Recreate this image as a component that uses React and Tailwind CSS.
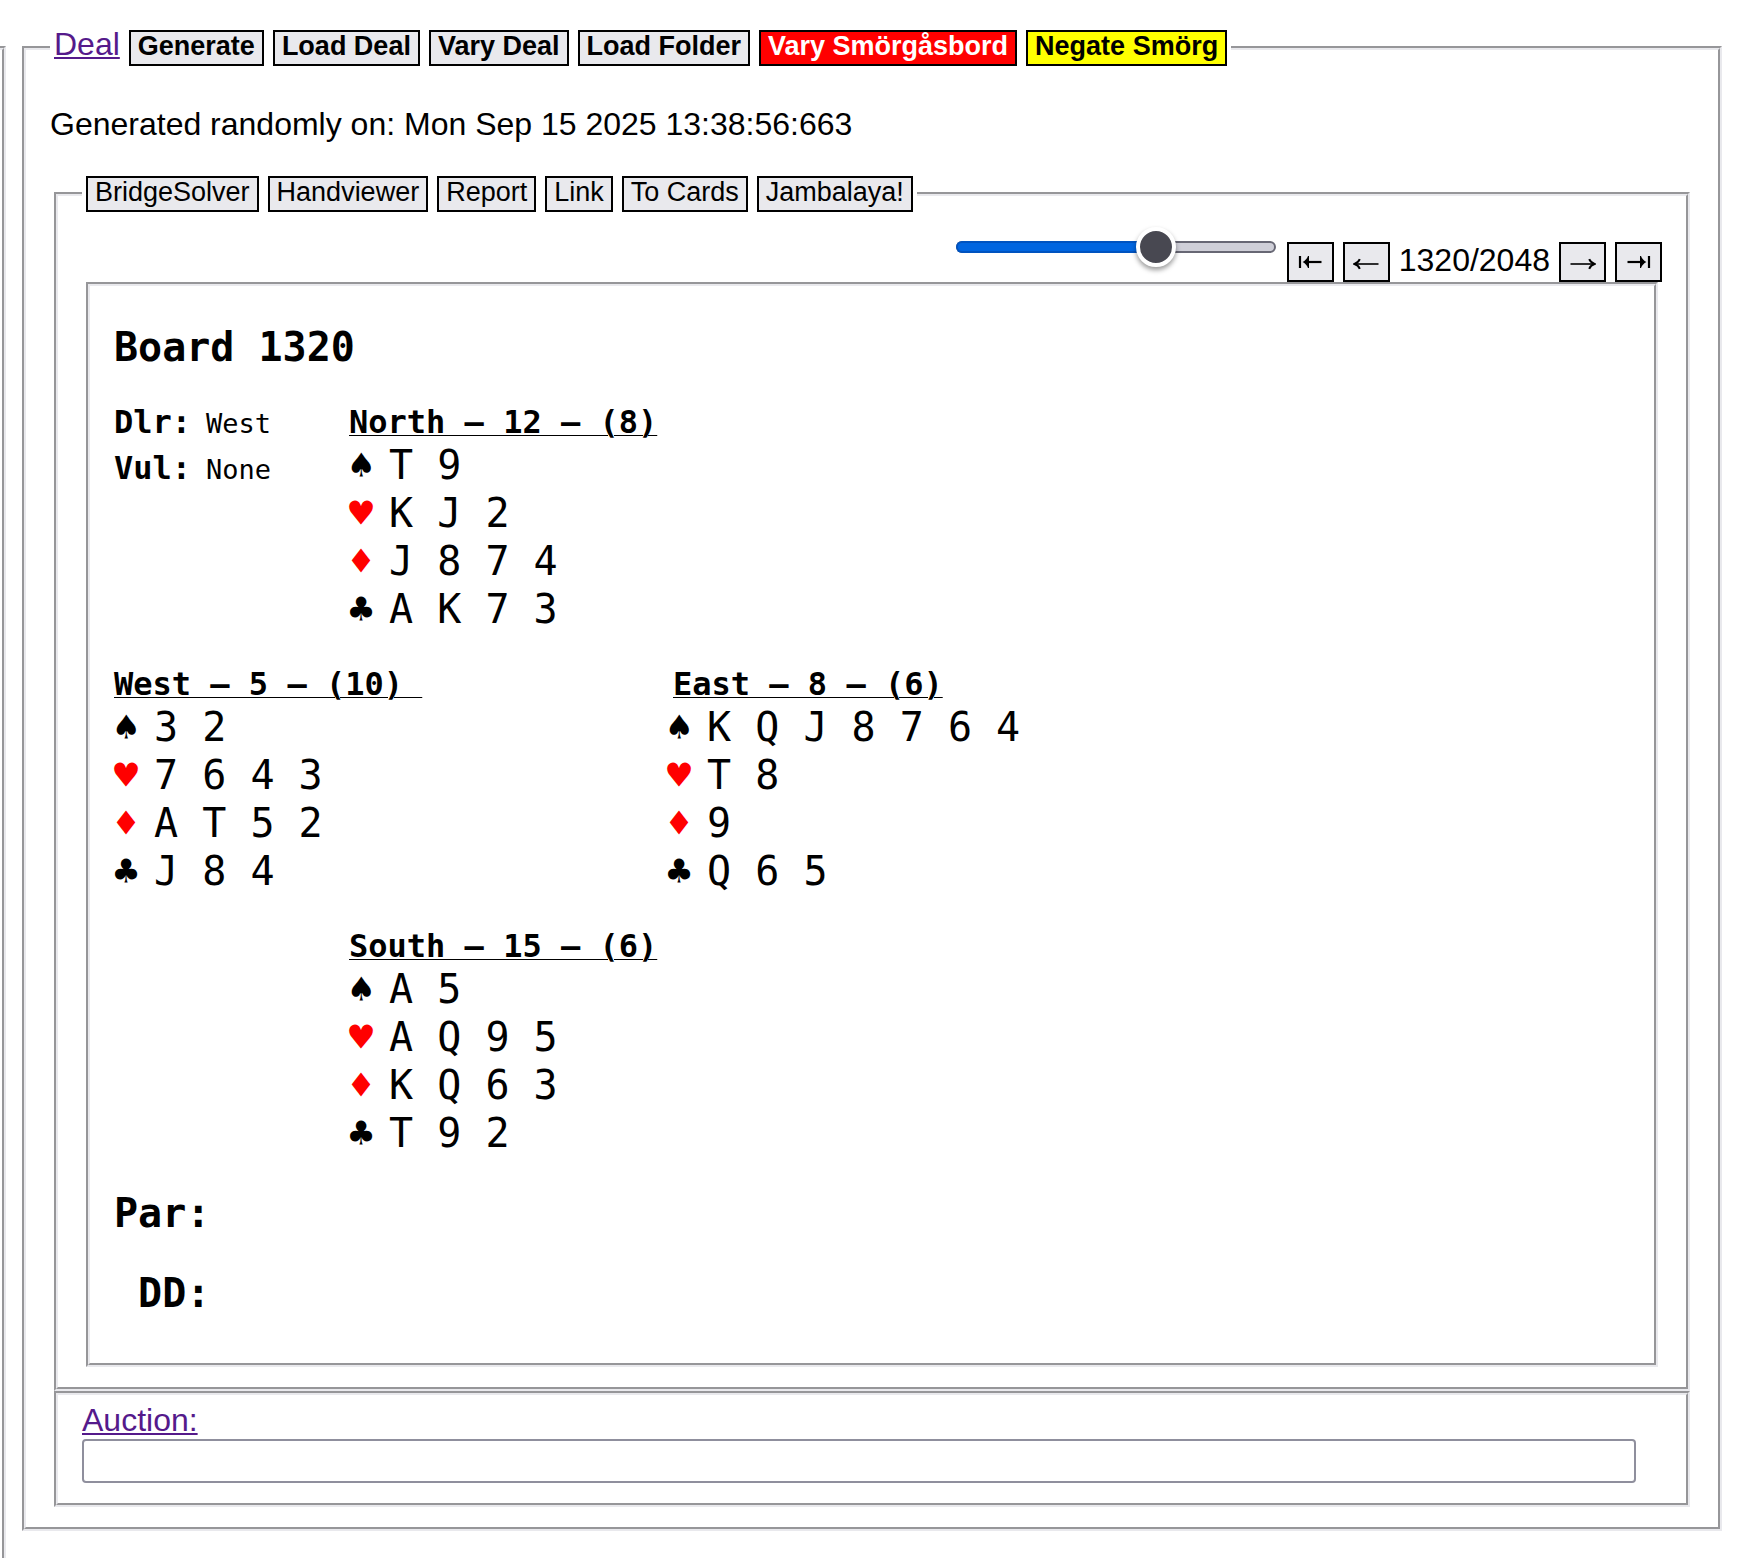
import React, { useState } from 'react';

const TOTAL_BOARDS = 2048;

const SUITS = [
  { key: 'spades', symbol: '\u2660', color: 'text-black' },
  { key: 'hearts', symbol: '\u2665', color: 'text-[#ff0000]' },
  { key: 'diamonds', symbol: '\u2666', color: 'text-[#ff0000]' },
  { key: 'clubs', symbol: '\u2663', color: 'text-black' },
];

const HANDS = {
  north: { title: 'North – 12 – (8)', spades: 'T 9', hearts: 'K J 2', diamonds: 'J 8 7 4', clubs: 'A K 7 3' },
  west: { title: 'West – 5 – (10) ', spades: '3 2', hearts: '7 6 4 3', diamonds: 'A T 5 2', clubs: 'J 8 4' },
  east: { title: 'East – 8 – (6)', spades: 'K Q J 8 7 6 4', hearts: 'T 8', diamonds: '9', clubs: 'Q 6 5' },
  south: { title: 'South – 15 – (6)', spades: 'A 5', hearts: 'A Q 9 5', diamonds: 'K Q 6 3', clubs: 'T 9 2' },
};

const DEAL_ACTIONS = [
  { label: 'Generate', className: 'bg-[#e9e9ed]' },
  { label: 'Load Deal', className: 'bg-[#e9e9ed]' },
  { label: 'Vary Deal', className: 'bg-[#e9e9ed]' },
  { label: 'Load Folder', className: 'bg-[#e9e9ed]' },
  { label: 'Vary Smörgåsbord', className: 'bg-[#ff0000] text-white' },
  { label: 'Negate Smörg', className: 'bg-[#ffff00]' },
];

const BOARD_ACTIONS = ['BridgeSolver', 'Handviewer', 'Report', 'Link', 'To Cards', 'Jambalaya!'];

const Button = ({ className = '', children }) => (
  <button
    type="button"
    className={`border-2 border-black px-[7px] pb-1 text-[27px] leading-7 whitespace-nowrap ${className}`}
  >
    {children}
  </button>
);

const NavButton = ({ label, onClick, children }) => (
  <button
    type="button"
    aria-label={label}
    onClick={onClick}
    className="flex h-10 w-[47px] items-center justify-center border-2 border-black bg-[#e9e9ed]"
  >
    {children}
  </button>
);

// Short heavy arrow that runs into a bar
const BarArrow = ({ className = '' }) => (
  <svg viewBox="0 0 24 14" className={`h-[14px] w-6 ${className}`} fill="none" aria-hidden="true">
    <path d="M2 1v12" stroke="black" strokeWidth="2.2" />
    <path d="M9 7h14.5" stroke="black" strokeWidth="2.2" />
    <path d="M4.6 7C7 5.8 9 3.8 10 1H11V13H10C9 10.2 7 8.2 4.6 7Z" fill="black" />
  </svg>
);

const ThinArrow = ({ className = '' }) => (
  <svg viewBox="0 0 26 12" className={`mt-1 h-3 w-[26px] ${className}`} fill="none" aria-hidden="true">
    <path d="M2 6h23.5" stroke="black" strokeWidth="1.6" />
    <path d="M6.8 1.2C5.8 3.6 3.9 5.2 1.4 6c2.5.8 4.4 2.4 5.4 4.8" stroke="black" strokeWidth="2" />
  </svg>
);

const BoardSlider = ({ value, onChange }) => {
  const fill = 20 + (value / TOTAL_BOARDS) * 280;

  return (
    <div className="relative mr-[2px] mb-[15px] flex h-10 w-80 items-center">
      <div className="h-3 w-full overflow-hidden rounded-full border-2 border-[#676774] bg-[#cfcfd8]" />
      <div
        className="absolute left-0 h-3 rounded-l-full border-2 border-r-0 border-[#0053c0] bg-[#0065e0]"
        style={{ width: `${fill}px` }}
      />
      <input
        type="range"
        min="0"
        max={TOTAL_BOARDS}
        value={value}
        onChange={(e) => onChange(Number(e.target.value))}
        aria-label="Board"
        className="absolute inset-0 h-10 w-full appearance-none bg-transparent [&::-webkit-slider-thumb]:h-10 [&::-webkit-slider-thumb]:w-10 [&::-webkit-slider-thumb]:appearance-none [&::-webkit-slider-thumb]:rounded-full [&::-webkit-slider-thumb]:border-4 [&::-webkit-slider-thumb]:border-white [&::-webkit-slider-thumb]:bg-[#484851] [&::-webkit-slider-thumb]:shadow-[0_3px_5px_rgba(0,0,0,0.4)]"
      />
    </div>
  );
};

const Hand = ({ hand, titleClassName = '' }) => (
  <div>
    <h3
      className={`text-[32px] leading-[38px] font-bold whitespace-pre underline decoration-1 underline-offset-2 ${titleClassName}`}
    >
      {hand.title}
    </h3>
    {SUITS.map((suit) => (
      <div key={suit.key} className="flex gap-4 text-[40px] leading-[48px] whitespace-nowrap">
        <span className={suit.color}>{suit.symbol}</span>
        <span>{hand[suit.key]}</span>
      </div>
    ))}
  </div>
);

const Info = ({ label, value }) => (
  <div className="flex items-baseline gap-[15px] leading-[38px]">
    <span className="text-[32px] font-bold">{label}</span>
    <span className="text-[27px]">{value}</span>
  </div>
);

const App = () => {
  const [board, setBoard] = useState(1320);
  const [auction, setAuction] = useState('');

  return (
    <div className="flex min-h-screen bg-white font-['Liberation_Sans',Arial,sans-serif] text-[32px] leading-9 text-black">
      {/* Edge of the neighbouring panel */}
      <div className="mt-[46px] w-[6px] shrink-0 border-t-4 border-r-4 border-[#e9e9ed] [border-style:groove]" />

      <main className="min-w-0 flex-1 pt-[30px] pr-5 pl-4">
        <fieldset className="border-4 border-[#e9e9ed] px-6 pt-10 pb-5 [border-style:groove]">
          <legend className="px-1">
            <div className="flex items-baseline gap-[9px]">
              <a href="#deal" className="leading-7 text-[#551a8b] underline decoration-2 underline-offset-2">Deal</a>
              {DEAL_ACTIONS.map((action) => (
                <Button key={action.label} className={`font-bold ${action.className}`}>{action.label}</Button>
              ))}
            </div>
          </legend>

          <p>Generated randomly on: Mon Sep 15 2025 13:38:56:663</p>

          {/* Board */}
          <fieldset className="mx-1 mt-[34px] border-4 border-[#e9e9ed] px-6 pb-5 [border-style:groove]">
            <legend className="px-1">
              <div className="flex items-baseline gap-[9px]">
                {BOARD_ACTIONS.map((label) => (
                  <Button key={label} className="bg-[#e9e9ed]">{label}</Button>
                ))}
              </div>
            </legend>

            <div className="flex items-end justify-end gap-[9px] pt-[15px]">
              <BoardSlider value={board} onChange={setBoard} />
              <NavButton label="First board" onClick={() => setBoard(1)}><BarArrow /></NavButton>
              <NavButton label="Previous board" onClick={() => setBoard(Math.max(1, board - 1))}><ThinArrow /></NavButton>
              <span className="pb-1">{board}/{TOTAL_BOARDS}</span>
              <NavButton label="Next board" onClick={() => setBoard(Math.min(TOTAL_BOARDS, board + 1))}>
                <ThinArrow className="rotate-180" />
              </NavButton>
              <NavButton label="Last board" onClick={() => setBoard(TOTAL_BOARDS)}>
                <BarArrow className="rotate-180" />
              </NavButton>
            </div>

            <fieldset className="mx-1 border-4 border-[#e9e9ed] px-6 pt-[37px] pb-[46px] [border-style:groove]">
              <div className="flex flex-col gap-8 font-['DejaVu_Sans_Mono',monospace]">
                <h2 className="text-[40px] leading-[48px] font-bold">Board {board}</h2>

                <div className="grid grid-cols-[235px_318px_1fr] gap-y-8">
                  <div className="flex flex-col gap-[6px]">
                    <Info label="Dlr:" value="West" />
                    <Info label="Vul:" value="None" />
                  </div>
                  <div className="col-span-2">
                    <Hand hand={HANDS.north} />
                  </div>
                  <div className="col-span-2">
                    <Hand hand={HANDS.west} />
                  </div>
                  <Hand hand={HANDS.east} titleClassName="pl-[6px]" />
                  <div className="col-span-2 col-start-2">
                    <Hand hand={HANDS.south} />
                  </div>
                </div>

                <h2 className="text-[40px] leading-[48px] font-bold whitespace-pre">Par:</h2>
                <h2 className="text-[40px] leading-[48px] font-bold whitespace-pre"> DD:</h2>
              </div>
            </fieldset>
          </fieldset>

          {/* Auction */}
          <fieldset className="mx-1 border-4 border-[#e9e9ed] pt-[7px] pr-[50px] pb-5 pl-6 [border-style:groove]">
            <label htmlFor="auction" className="block">
              <a href="#auction" className="text-[#551a8b] underline decoration-2 underline-offset-2">Auction:</a>
            </label>
            <input
              id="auction"
              type="text"
              value={auction}
              onChange={(e) => setAuction(e.target.value)}
              className="mt-px block h-11 w-full rounded border-2 border-[#8f8f9d] bg-white px-1 text-[27px]"
            />
          </fieldset>
        </fieldset>
      </main>
    </div>
  );
};

export default App;
